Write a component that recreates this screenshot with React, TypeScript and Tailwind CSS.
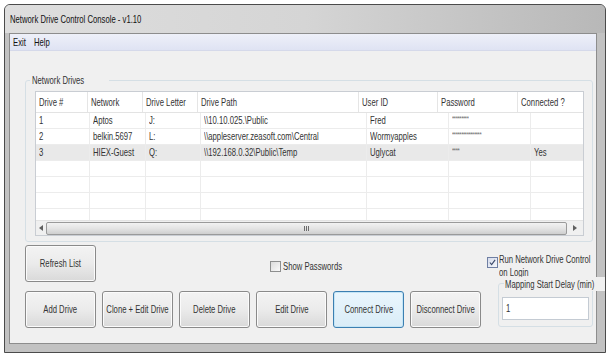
import React from 'react'

const FONT = { fontFamily: '"Liberation Sans", Arial, sans-serif' }

// narrow text: the original is squeezed horizontally
function T({ children, center, className = '' }: { children: React.ReactNode; center?: boolean; className?: string }) {
  return (
    <span
      className={`inline-block whitespace-nowrap scale-x-[0.7] ${center ? 'origin-center' : 'origin-left'} ${className}`}
    >
      {children}
    </span>
  )
}

const COLS = [
  { label: 'Drive #', w: 'w-[54px]' },
  { label: 'Network', w: 'w-[56px]' },
  { label: 'Drive Letter', w: 'w-[55px]' },
  { label: 'Drive Path', w: 'w-[166px]' },
  { label: 'User ID', w: 'w-[82px]' },
  { label: 'Password', w: 'w-[82px]' },
  { label: 'Connected ?', w: 'flex-1' },
]

const ROWS = [
  ['1', 'Aptos', 'J:', '\\\\10.10.025.\\Public', 'Fred', '*********', ''],
  ['2', 'belkin.5697', 'L:', '\\\\appleserver.zeasoft.com\\Central', 'Wormyapples', '****************', ''],
  ['3', 'HIEX-Guest', 'Q:', '\\\\192.168.0.32\\Public\\Temp', 'Uglycat', '****', 'Yes'],
  ['', '', '', '', '', '', ''],
  ['', '', '', '', '', '', ''],
  ['', '', '', '', '', '', ''],
  ['', '', '', '', '', '', ''],
]

function Button({ label, active }: { label: string; active?: boolean }) {
  return (
    <button
      className={`w-[71px] h-[37px] rounded-[3px] border flex items-center justify-center text-[11px] text-[#333] ${
        active
          ? 'border-[#3c7fb1] bg-gradient-to-b from-[#eaf6fd] to-[#d9ecf7] shadow-[inset_0_0_0_1px_#c4e5f6]'
          : 'border-[#8a8a8a] bg-gradient-to-b from-[#f3f3f3] via-[#ebebeb] to-[#d9d9d9] shadow-[inset_0_0_0_1px_#fbfbfb]'
      }`}
    >
      <T center>{label}</T>
    </button>
  )
}

function Checkbox({ checked }: { checked?: boolean }) {
  return (
    <span
      className={`w-[11px] h-[11px] border flex items-center justify-center shrink-0 ${
        checked ? 'border-[#6f7fa3] bg-gradient-to-br from-[#d6dcec] to-[#f4f6fb]' : 'border-[#8e8f8f] bg-gradient-to-br from-[#dcdcdc] to-[#fafafa]'
      }`}
    >
      {checked && (
        <svg width="7" height="7" viewBox="0 0 8 8">
          <path d="M1 4 L3 6.5 L7 1" fill="none" stroke="#3b4a6b" strokeWidth="1.3" />
        </svg>
      )}
    </span>
  )
}

export default function App() {
  return (
    <div className="w-[610px] h-[360px] bg-white pl-[4px] pt-[4px] overflow-hidden text-[#333]" style={FONT}>
      <div className="w-[602px] h-[349px] flex flex-col border border-[#4b4b4b] rounded-t-[6px] bg-[#c2c2c2] overflow-hidden">
        {/* title bar */}
        <div className="h-[28px] flex items-center pl-[5px] bg-gradient-to-r from-[#dedede] via-[#d5d5d5] to-[#b8b8b8] text-[11px] text-[#111]">
          <T>Network Drive Control Console - v1.10</T>
        </div>

        <div className="flex-1 flex flex-col ml-[4px] mr-[8px] mb-[8px] border border-[#8d8d8d]">
          {/* menu */}
          <div className="h-[17px] flex items-center gap-[8px] pl-[3px] bg-gradient-to-b from-[#eef0f9] to-[#dfe3f3] border-b border-[#d5d9ea] text-[11px] text-[#111]">
            <T className="w-[13px]">Exit</T>
            <T>Help</T>
          </div>

          {/* client */}
          <div className="flex-1 bg-[#f0f0f0] pl-[15px] pr-[3px] flex flex-col">
            {/* group box */}
            <div className="relative mt-[29px] h-[162px] border border-[#d5dfe5] rounded-[3px] pt-[10px] pl-[9px] pr-[8px]">
              <span className="absolute -top-[8px] left-[4px] px-[2px] bg-[#f0f0f0] text-[11px] leading-[14px]">
                <T>Network Drives</T>
              </span>

              {/* grid */}
              <div className="h-[145px] border border-[#c9cdd3] bg-white flex flex-col text-[11px]">
                <div className="h-[21px] flex border-b border-[#e3e3e3] shrink-0">
                  {COLS.map((c, i) => (
                    <div
                      key={c.label}
                      className={`${c.w} flex items-center pl-[3px] ${i < COLS.length - 1 ? 'border-r border-[#e5e5e5]' : ''}`}
                    >
                      <T>{c.label}</T>
                    </div>
                  ))}
                </div>
                <div className="flex-1 overflow-hidden">
                  {ROWS.map((r, ri) => (
                    <div
                      key={ri}
                      className={`h-[16px] flex border-b border-[#ececec] ${ri === 2 ? 'bg-[#e9e9e9]' : 'bg-white'}`}
                    >
                      {r.map((cell, ci) => (
                        <div
                          key={ci}
                          className={`${COLS[ci].w} flex items-center pl-[3px] overflow-hidden ${
                            ci < COLS.length - 1 ? 'border-r border-[#ececec]' : ''
                          }`}
                        >
                          {ci === 5 && cell ? (
                            <T className="text-[8px] tracking-[-0.5px] leading-none mb-[3px] text-[#666]">{cell}</T>
                          ) : (
                            <T>{cell}</T>
                          )}
                        </div>
                      ))}
                    </div>
                  ))}
                </div>
                {/* horizontal scrollbar */}
                <div className="h-[15px] shrink-0 flex items-center bg-[#f0f0f0] border-t border-[#e3e3e3]">
                  <div className="w-[10px] flex justify-center">
                    <svg width="4" height="6" viewBox="0 0 4 6">
                      <path d="M4 0 L0 3 L4 6 Z" fill="#606060" />
                    </svg>
                  </div>
                  <div className="flex-1 h-[13px] rounded-[2px] border border-[#9a9a9a] bg-gradient-to-b from-[#f2f2f2] via-[#e4e4e4] to-[#cfcfcf] flex items-center justify-center">
                    <span className="flex gap-[1px]">
                      <span className="w-[1px] h-[5px] bg-[#6c6c6c]" />
                      <span className="w-[1px] h-[5px] bg-[#6c6c6c]" />
                      <span className="w-[1px] h-[5px] bg-[#6c6c6c]" />
                    </span>
                  </div>
                  <div className="w-[16px] flex justify-center">
                    <svg width="4" height="6" viewBox="0 0 4 6">
                      <path d="M0 0 L4 3 L0 6 Z" fill="#606060" />
                    </svg>
                  </div>
                </div>
              </div>
            </div>

            {/* refresh / options row */}
            <div className="flex items-start mt-[3px] text-[11px]">
              <Button label="Refresh List" />
              <div className="w-[60px] flex items-center gap-[2px] ml-[174px] mt-[13px]">
                <Checkbox />
                <T>Show Passwords</T>
              </div>
              <div className="w-[100px] flex items-start gap-[1px] ml-[157px] mt-[8px]">
                <div className="mt-[4px]">
                  <Checkbox checked />
                </div>
                <div className="w-[90px] flex flex-col leading-[13px]">
                  <T>Run Network Drive Control</T>
                  <T>on Login</T>
                </div>
              </div>
            </div>

            {/* action buttons */}
            <div className="flex items-start">
              <div className="flex gap-[6px] mt-[9px]">
                <Button label="Add Drive" />
                <Button label="Clone + Edit Drive" />
                <Button label="Delete Drive" />
                <Button label="Edit Drive" />
                <Button label="Connect Drive" active />
                <Button label="Disconnect Drive" />
              </div>
              <div className="relative ml-[17px] mt-[1px] w-[95px] h-[44px] border border-[#d5dfe5] rounded-[3px] px-[3px] pt-[13px]">
                <span className="absolute -top-[7px] left-[5px] px-[1px] bg-[#f0f0f0] text-[11px] leading-[14px]">
                  <T>Mapping Start Delay (min)</T>
                </span>
                <div className="h-[23px] bg-white border border-[#c4cbd3] flex items-start pl-[3px] pt-[2px] text-[11px]">
                  <T>1</T>
                </div>
              </div>
            </div>
          </div>
        </div>
      </div>
    </div>
  )
}
